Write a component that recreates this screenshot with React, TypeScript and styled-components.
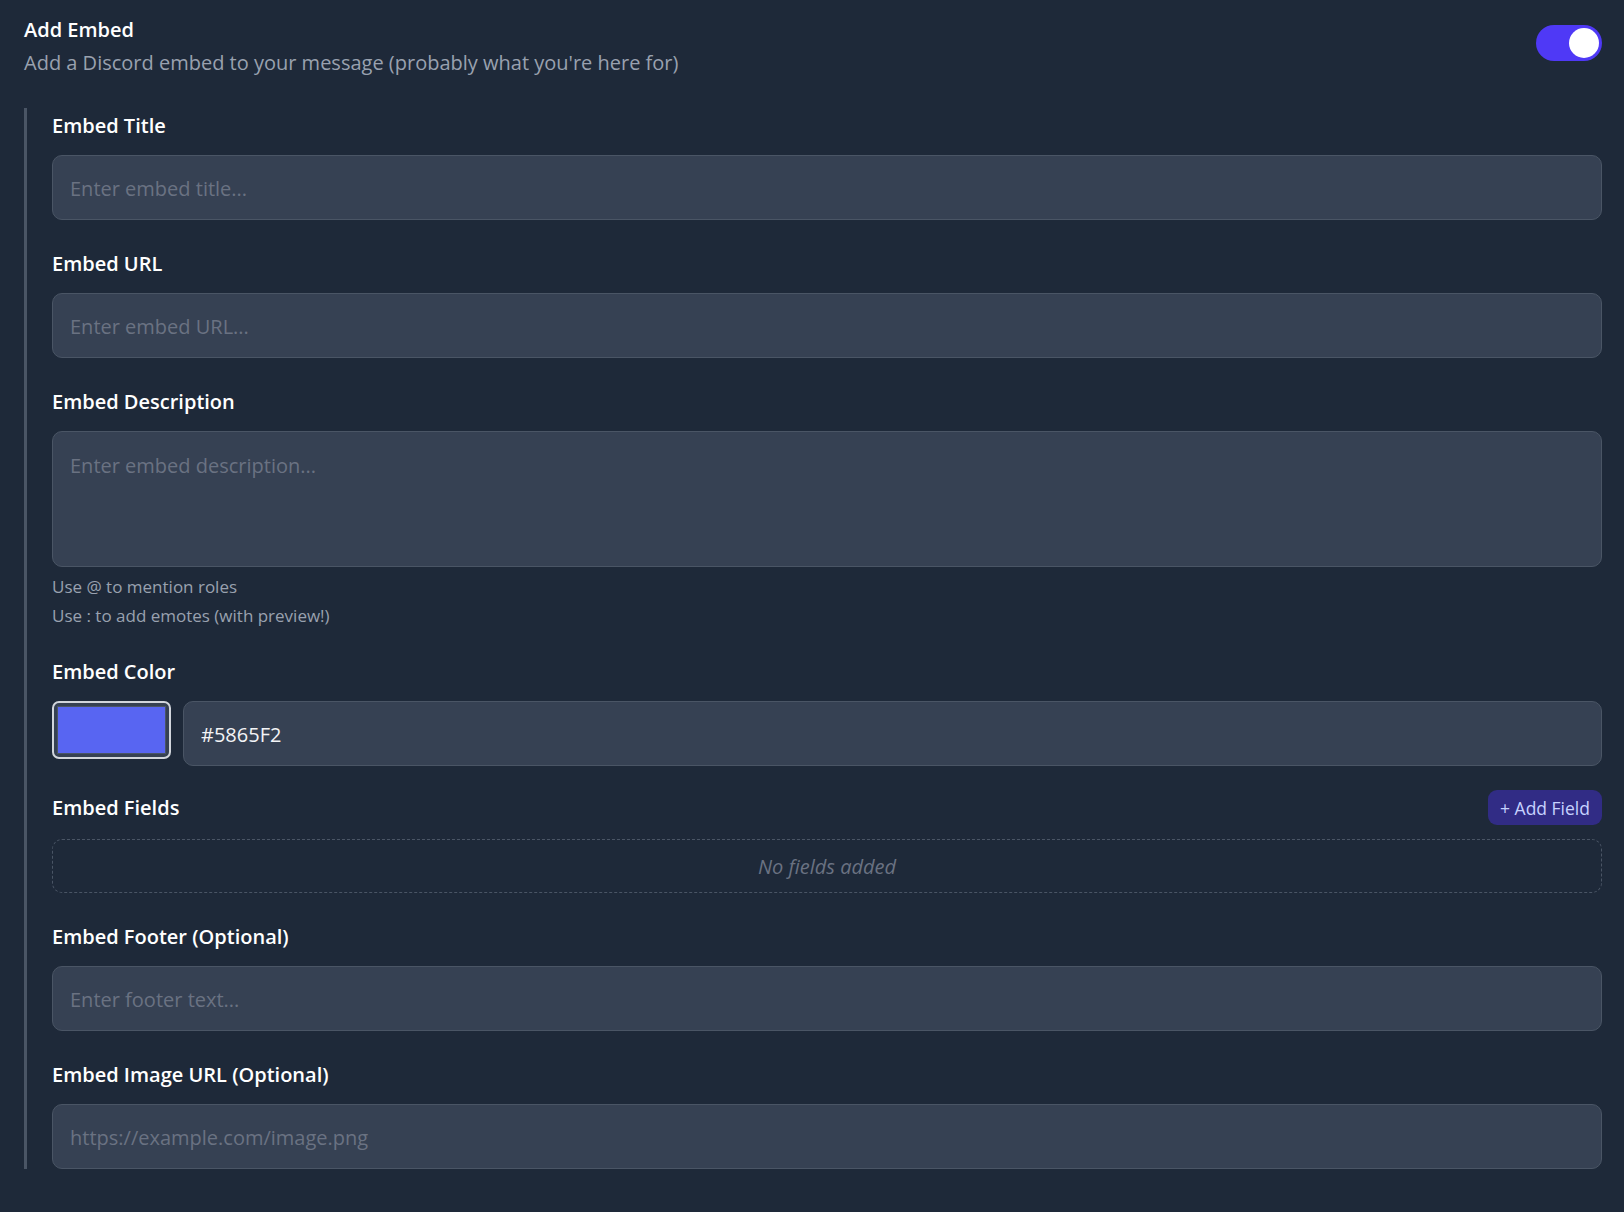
import React, { useState } from 'react';
import styled, { createGlobalStyle } from 'styled-components';

const GlobalStyle = createGlobalStyle`
  body {
    margin: 0;
    background: #1e2939;
    font-family: 'Open Sans', 'Noto Sans', sans-serif;
  }
  * {
    box-sizing: border-box;
  }
`;

const EmbedEditor = () => {
  const [enabled, setEnabled] = useState(true);
  const [color, setColor] = useState('#5865F2');

  return (
    <Page>
      <Header>
        <div>
          <Title>Add Embed</Title>
          <Subtitle>Add a Discord embed to your message (probably what you're here for)</Subtitle>
        </div>
        <Toggle $on={enabled} onClick={() => setEnabled(!enabled)}>
          <Knob />
        </Toggle>
      </Header>

      <Section>
        <Field>
          <Label>Embed Title</Label>
          <Input type="text" placeholder="Enter embed title..." />
        </Field>

        <Field>
          <Label>Embed URL</Label>
          <Input type="text" placeholder="Enter embed URL..." />
        </Field>

        <Field>
          <Label>Embed Description</Label>
          <TextArea placeholder="Enter embed description..." />
          <Hint>Use @ to mention roles</Hint>
          <Hint $second>Use : to add emotes (with preview!)</Hint>
        </Field>

        <Field>
          <Label>Embed Color</Label>
          <ColorRow>
            <Swatch>
              <SwatchFill style={{ background: color }} />
            </Swatch>
            <Input
              type="text"
              value={color}
              onChange={(e) => setColor(e.target.value)}
            />
          </ColorRow>
        </Field>

        <Field>
          <FieldsHeader>
            <Label $inline>Embed Fields</Label>
            <AddButton type="button">+ Add Field</AddButton>
          </FieldsHeader>
          <EmptyBox>No fields added</EmptyBox>
        </Field>

        <Field>
          <Label>Embed Footer (Optional)</Label>
          <Input type="text" placeholder="Enter footer text..." />
        </Field>

        <Field>
          <Label>Embed Image URL (Optional)</Label>
          <Input type="text" placeholder="https://example.com/image.png" />
        </Field>
      </Section>
    </Page>
  );
};

const App = () => (
  <>
    <GlobalStyle />
    <EmbedEditor />
  </>
);

const Page = styled.div`
  min-height: 100vh;
  padding: 16px 22px 40px 24px;
`;

const Header = styled.div`
  display: flex;
  justify-content: space-between;
  align-items: center;
`;

const Title = styled.div`
  font-size: 20px;
  font-weight: 600;
  line-height: 28px;
  color: #ffffff;
`;

const Subtitle = styled.div`
  margin-top: 5px;
  font-size: 20px;
  line-height: 28px;
  color: #99a1af;
`;

const Toggle = styled.button<{ $on: boolean }>`
  display: flex;
  justify-content: ${(p) => (p.$on ? 'flex-end' : 'flex-start')};
  align-items: center;
  width: 66px;
  height: 36px;
  padding: 3px;
  margin-top: -7px;
  border: none;
  border-radius: 18px;
  background: ${(p) => (p.$on ? '#4f39f6' : '#4a5565')};
  cursor: pointer;
`;

const Knob = styled.span`
  width: 30px;
  height: 30px;
  border-radius: 50%;
  background: #ffffff;
`;

const Section = styled.div`
  display: flex;
  flex-direction: column;
  gap: 30px;
  margin-top: 31px;
  padding: 4px 0 0 25px;
  border-left: 3px solid #4a5565;
`;

const Field = styled.div`
  display: flex;
  flex-direction: column;
`;

const Label = styled.label<{ $inline?: boolean }>`
  font-size: 20px;
  font-weight: 600;
  line-height: 28px;
  color: #ffffff;
  margin-bottom: ${(p) => (p.$inline ? '0' : '15px')};
`;

const Input = styled.input`
  width: 100%;
  height: 65px;
  padding: 2px 17px 0;
  background: #364153;
  border: 1px solid #4a5565;
  border-radius: 10px;
  font-family: inherit;
  font-size: 20px;
  color: #f3f4f6;
  outline: none;

  &::placeholder {
    color: #6a7282;
  }
`;

const TextArea = styled.textarea`
  width: 100%;
  height: 136px;
  padding: 20px 17px;
  background: #364153;
  border: 1px solid #4a5565;
  border-radius: 10px;
  font-family: inherit;
  font-size: 20px;
  line-height: 28px;
  color: #f3f4f6;
  resize: none;
  outline: none;

  &::placeholder {
    color: #6a7282;
  }
`;

const Hint = styled.div<{ $second?: boolean }>`
  margin-top: ${(p) => (p.$second ? '4px' : '7px')};
  font-size: 17px;
  line-height: 25px;
  color: #99a1af;
`;

const ColorRow = styled.div`
  display: flex;
  align-items: flex-start;
  gap: 12px;
`;

const Swatch = styled.div`
  flex: 0 0 119px;
  height: 58px;
  padding: 3px;
  border: 2px solid #d1d5dc;
  border-radius: 7px;
  background: #364153;
`;

const SwatchFill = styled.div`
  width: 100%;
  height: 100%;
  border: 1px solid #4a5565;
`;

const FieldsHeader = styled.div`
  display: flex;
  justify-content: space-between;
  align-items: center;
  margin-top: -6px;
  margin-bottom: 14px;
`;

const AddButton = styled.button`
  height: 35px;
  padding: 0 12px;
  border: none;
  border-radius: 9px;
  background: #312c85;
  font-family: inherit;
  font-size: 17.5px;
  color: #c6d2ff;
  cursor: pointer;
`;

const EmptyBox = styled.div`
  display: flex;
  justify-content: center;
  align-items: center;
  height: 54px;
  border: 1px dashed #4a5565;
  border-radius: 10px;
  font-size: 20px;
  font-style: italic;
  color: #6a7282;
`;

export default App;
